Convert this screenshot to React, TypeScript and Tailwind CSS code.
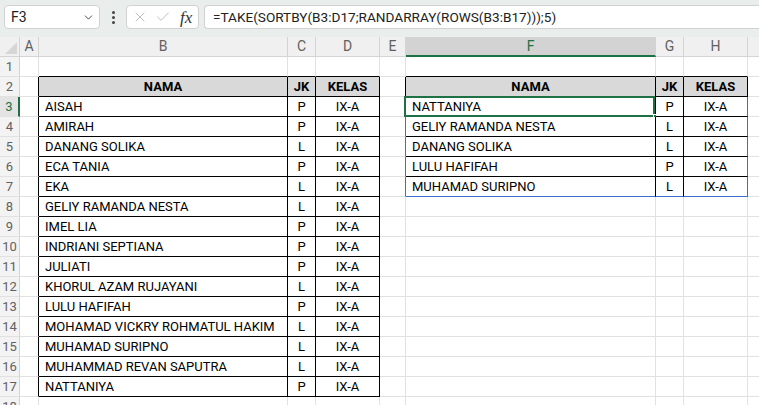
import { X, Check, ChevronDown } from "lucide-react"

// Sheet data: left table B2:D17, spilled result F2:H7
const students: [string, string, string][] = [
  ["AISAH", "P", "IX-A"],
  ["AMIRAH", "P", "IX-A"],
  ["DANANG SOLIKA", "L", "IX-A"],
  ["ECA TANIA", "P", "IX-A"],
  ["EKA", "L", "IX-A"],
  ["GELIY RAMANDA NESTA", "L", "IX-A"],
  ["IMEL LIA", "P", "IX-A"],
  ["INDRIANI SEPTIANA", "P", "IX-A"],
  ["JULIATI", "P", "IX-A"],
  ["KHORUL AZAM RUJAYANI", "L", "IX-A"],
  ["LULU HAFIFAH", "P", "IX-A"],
  ["MOHAMAD VICKRY ROHMATUL HAKIM", "L", "IX-A"],
  ["MUHAMAD SURIPNO", "L", "IX-A"],
  ["MUHAMMAD REVAN SAPUTRA", "L", "IX-A"],
  ["NATTANIYA", "P", "IX-A"],
]

const picked: [string, string, string][] = [
  ["NATTANIYA", "P", "IX-A"],
  ["GELIY RAMANDA NESTA", "L", "IX-A"],
  ["DANANG SOLIKA", "L", "IX-A"],
  ["LULU HAFIFAH", "P", "IX-A"],
  ["MUHAMAD SURIPNO", "L", "IX-A"],
]

const columns = [
  { label: "A", width: "w-[19px]" },
  { label: "B", width: "w-[249px]" },
  { label: "C", width: "w-[28px]" },
  { label: "D", width: "w-[64px]" },
  { label: "E", width: "w-[26px]" },
  { label: "F", width: "w-[250px]" },
  { label: "G", width: "w-[28px]" },
  { label: "H", width: "w-[64px]" },
  { label: "", width: "w-[40px]" },
]

const ROWS = 18

const inLeft = (r: number, c: number) => r >= 2 && r <= 17 && c >= 1 && c <= 3
const inRight = (r: number, c: number) => r >= 2 && r <= 7 && c >= 5 && c <= 7
const inTable = (r: number, c: number) => inLeft(r, c) || inRight(r, c)
const inSpill = (r: number, c: number) => r >= 3 && r <= 7 && c >= 5 && c <= 7

function cellValue(r: number, c: number): { text: string; header: boolean } | null {
  if (r === 2 && (c === 1 || c === 5)) return { text: "NAMA", header: true }
  if (r === 2 && (c === 2 || c === 6)) return { text: "JK", header: true }
  if (r === 2 && (c === 3 || c === 7)) return { text: "KELAS", header: true }
  if (inLeft(r, c)) return { text: students[r - 3][c - 1], header: false }
  if (inRight(r, c)) return { text: picked[r - 3][c - 5], header: false }
  return null
}

function Cell({ r, c }: { r: number; c: number }) {
  const value = cellValue(r, c)

  // right edge colour
  let right = "border-r-[#e1e1e1]"
  if (inSpill(r, c) !== inSpill(r, c + 1)) right = "border-r-[#3a6fd0]"
  else if (inTable(r, c) || inTable(r, c + 1)) right = "border-r-black"

  // bottom edge colour
  let bottom = "border-b-[#e1e1e1]"
  if (inSpill(r, c) && !inSpill(r + 1, c)) bottom = "border-b-[#3a6fd0]"
  else if (inTable(r, c) || inTable(r + 1, c)) bottom = "border-b-black"

  const fill = value?.header ? "bg-[#d9d9d9] font-bold" : "bg-white"
  const align = c === 1 || c === 5 ? (value?.header ? "justify-center" : "justify-start pl-[6px]") : "justify-center"
  const selected = r === 3 && c === 5

  return (
    <div
      className={`relative h-full shrink-0 flex items-center border-r border-b ${right} ${bottom} ${fill} ${align} ${columns[c].width} ${c === 8 ? "grow" : ""}`}
    >
      {value && <span className="whitespace-nowrap text-black">{value.text}</span>}
      {selected && (
        <>
          <div className="absolute -left-[2px] -top-[1px] -right-[0px] -bottom-[1px] border-2 border-[#1e7145] pointer-events-none" />
          <div className="absolute -right-[3px] -bottom-[3px] w-[5px] h-[5px] bg-[#1e7145] border border-white" />
        </>
      )}
    </div>
  )
}

export default function App() {
  return (
    <div className="w-[759px] h-[405px] overflow-hidden bg-white font-['Roboto',sans-serif] text-[13px]">
      {/* Formula bar */}
      <div className="h-[37px] bg-[#e9eeec] flex items-start pt-[5px] pl-[4px]">
        <div className="w-[96px] h-[24px] bg-white border border-[#d1d1d1] rounded-[4px] flex items-center justify-between pl-[6px] pr-[4px]">
          <span className="text-[14px] text-[#222]">F3</span>
          <ChevronDown className="w-[13px] h-[13px] text-[#333]" strokeWidth={1.6} />
        </div>
        <div className="w-[26px] h-[24px] flex flex-col items-center justify-center gap-[2px]">
          <span className="w-[3px] h-[3px] bg-[#444] rounded-full" />
          <span className="w-[3px] h-[3px] bg-[#444] rounded-full" />
          <span className="w-[3px] h-[3px] bg-[#444] rounded-full" />
        </div>
        <div className="w-[73px] h-[24px] bg-white border border-[#d1d1d1] rounded-[4px] flex items-center pl-[5px] gap-[7px]">
          <X className="w-[16px] h-[16px] text-[#b4b4b4]" strokeWidth={1.3} />
          <Check className="w-[16px] h-[16px] text-[#b4b4b4]" strokeWidth={1.3} />
          <span className="font-['Liberation_Serif',serif] italic text-[17px] text-[#333] leading-none ml-[2px]">fx</span>
        </div>
        <div className="ml-[5px] flex-1 h-[24px] bg-white border border-[#d1d1d1] border-r-0 rounded-l-[4px] flex items-center pl-[8px]">
          <span className="text-[13.6px] text-[#222] whitespace-nowrap">
            =TAKE(SORTBY(B3:D17;RANDARRAY(ROWS(B3:B17)));5)
          </span>
        </div>
      </div>

      {/* Column headers */}
      <div className="flex h-[20px] bg-[#f0f0f0] text-[#616161] text-[14px]">
        <div className="w-[20px] shrink-0 h-full border-r border-b border-[#d4d4d4] relative">
          <svg className="absolute right-[2px] bottom-[2px]" width="12" height="12" viewBox="0 0 12 12">
            <path d="M12 0 L12 12 L0 12 Z" fill="#d6d6d6" />
          </svg>
        </div>
        {columns.map((col, i) => (
          <div
            key={i}
            className={`${col.width} ${i === 8 ? "grow" : ""} shrink-0 h-full flex items-center justify-center border-r border-[#d4d4d4] ${
              i === 5 ? "bg-[#d3d3d3] text-[#1e7145] border-b-2 border-b-[#1e7145]" : "border-b border-b-[#d4d4d4]"
            }`}
          >
            {col.label}
          </div>
        ))}
      </div>

      {/* Sheet rows */}
      {Array.from({ length: ROWS }, (_, i) => i + 1).map((r) => (
        <div key={r} className="flex h-[20px]">
          <div
            className={`w-[20px] shrink-0 h-full flex items-center justify-center text-[13px] border-b border-b-[#e1e1e1] ${
              r === 3
                ? "bg-[#e4e4e4] text-[#1e7145] border-r-2 border-r-[#1e7145]"
                : "bg-[#f3f3f3] text-[#616161] border-r border-r-[#d4d4d4]"
            }`}
          >
            {r}
          </div>
          {columns.map((_, c) => (
            <Cell key={c} r={r} c={c} />
          ))}
        </div>
      ))}
    </div>
  )
}
